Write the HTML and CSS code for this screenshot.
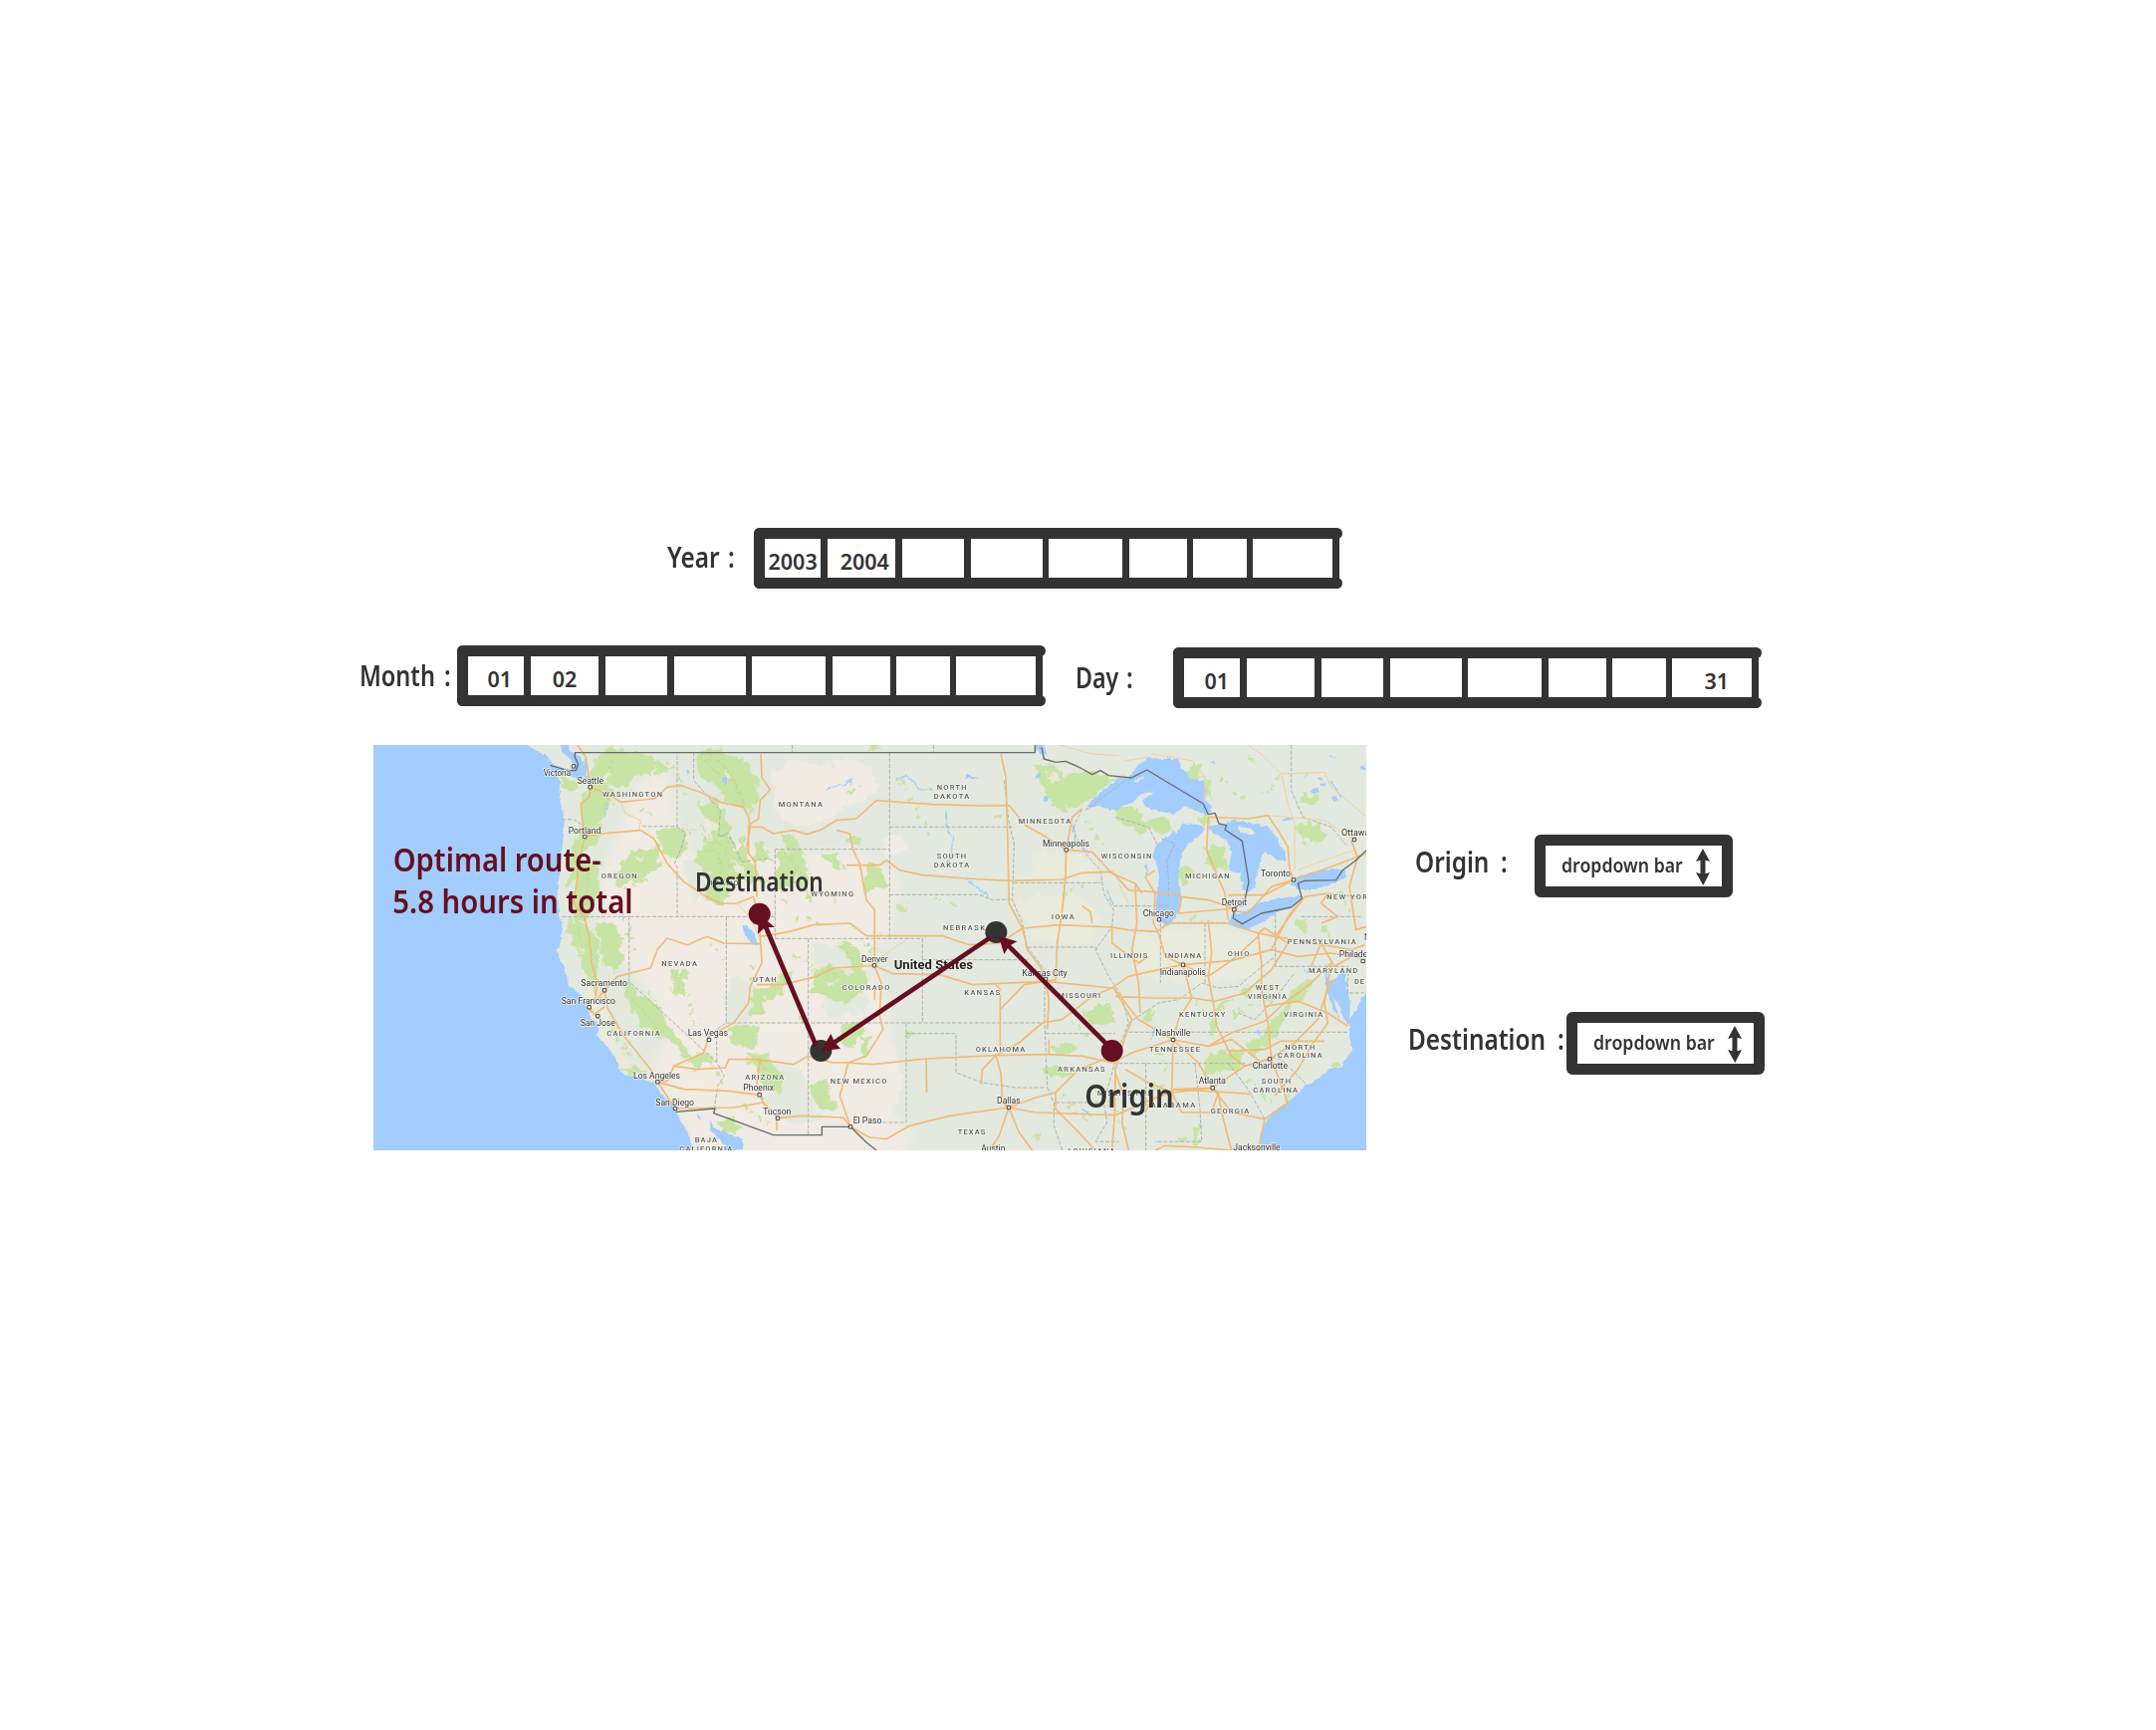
FILE: index.html
```html
<!DOCTYPE html>
<html lang="en">
<head>
<meta charset="utf-8">
<title>Optimal route</title>
<link rel="stylesheet" href="styles.css">
</head>
<body>
<main class="page">
  <section class="row row-year">
    <div class="label label-year"><span>Year</span><span class="colon">:</span></div>
    <div class="strip"><div class="cell c-2003">2003</div><div class="cell c-2004">2004</div><div class="cell"></div><div class="cell"></div><div class="cell"></div><div class="cell"></div><div class="cell"></div><div class="cell"></div></div>
  </section>
  <section class="row row-dates">
    <div class="label label-month"><span>Month</span><span class="colon">:</span></div>
    <div class="strip"><div class="cell c-m1">01</div><div class="cell c-m2">02</div><div class="cell"></div><div class="cell"></div><div class="cell"></div><div class="cell"></div><div class="cell"></div><div class="cell"></div></div>
    <div class="label label-day"><span>Day</span><span class="colon">:</span></div>
    <div class="strip strip-day"><div class="cell c-d1">01</div><div class="cell"></div><div class="cell"></div><div class="cell"></div><div class="cell"></div><div class="cell"></div><div class="cell"></div><div class="cell c-d31">31</div></div>
  </section>
  <section class="row row-map">
    <svg class="map" viewBox="15 23 2991 1221" preserveAspectRatio="none">
      <defs>
        <filter id="rough" x="-2%" y="-2%" width="104%" height="104%"><feTurbulence type="fractalNoise" baseFrequency="0.035" numOctaves="3" seed="4"/><feDisplacementMap in="SourceGraphic" scale="42" xChannelSelector="R" yChannelSelector="G"/></filter>
        <filter id="coast" x="-2%" y="-2%" width="104%" height="104%"><feTurbulence type="fractalNoise" baseFrequency="0.06" numOctaves="2" seed="8"/><feDisplacementMap in="SourceGraphic" scale="12" xChannelSelector="R" yChannelSelector="G"/></filter>
        <filter id="soft"><feGaussianBlur stdDeviation="16"/></filter>
        <clipPath id="landclip"><path d="M600 0L605 40 640 60 655 100 640 130 600 112 550 105 575 125 580 150 575 180 582 215 590 245 588 290 583 340 578 400 570 450 568 490 572 520 583 560 582 600 575 630 568 640 572 660 590 690 598 720 600 745 625 765 640 775 655 800 663 820 668 840 690 860 695 880 688 895 715 925 740 960 755 985 755 1010 825 1028 860 1040 880 1070 915 1100 928 1130 950 1170 965 1200 985 1260H2680L2690 1200 2700 1160 2725 1130 2760 1110 2790 1080 2820 1050 2860 1030 2890 1000 2935 990 2965 940 2955 870 2920 800 2895 740 2940 705 2958 800 2980 815 3020 740V0Z"/></clipPath>
      </defs>
      <rect class="water" width="3030" height="1260"/>
      <g filter="url(#coast)">
        <path class="land" d="M470 0L480 25 515 45 545 62 560 84 600 98 620 88 605 62 580 40 578 0Z"/>
        <path class="land" d="M600 0L605 40 640 60 655 100 640 130 600 112 550 105 575 125 580 150 575 180 582 215 590 245 588 290 583 340 578 400 570 450 568 490 572 520 583 560 582 600 575 630 568 640 572 660 590 690 598 720 600 745 625 765 640 775 655 800 663 820 668 840 690 860 695 880 688 895 715 925 740 960 755 985 755 1010 825 1028 860 1040 880 1070 915 1100 928 1130 950 1170 965 1200 985 1275H2680L2690 1200 2700 1160 2725 1130 2760 1110 2790 1080 2820 1050 2860 1030 2890 1000 2935 990 2940 975 2965 940 2955 905 2955 870 2935 840 2920 800 2895 770 2885 740 2910 725 2940 705 2950 760 2958 800 2955 850 2980 815 2995 780 3030 740V0Z"/>
      </g>
      <g clip-path="url(#landclip)">
        <path class="cream" filter="url(#soft)" d="M730 350L820 130 900 110 930 270 1010 380 1120 300 1200 350 1490 345 1600 420 1570 600 1500 650 1560 790 1580 960 1500 1060 1640 1200 1620 1260 1000 1260 940 1130 850 1000 900 900 820 720 720 650 690 500Z"/>
        <g class="cream" filter="url(#rough)"><path d="M1210 110l60-45 120 20 60 90-50 70-110 30-60-60zM1400 70l110 10 30 70-70 60-60-40zM1550 300l60-10 20 50-80 30zM1500 870l90 60 20 130-60 120-80-80z"/></g>
        <g class="pale"><path filter="url(#rough)" d="M640 700l40 20 60 180 60 110 40 20-50-10-80-90-60-130zM1950 490l180-30 80 80-40 90-170-20zM2300 600l180-30 230 30-20 120-200 30-180-30zM2000 340l150 20 50 80-200-10z"/><path filter="url(#rough)" class="sage" d="M1100 720l60 20 20 90-80 60-30-80zM1220 980l80 20 60 150-90 20-80-80zM1000 130l130-60 70 50 20 120-80 70-120-70zM950 370l60 0 30 60-60 60zM1330 620l120 10 60 80-20 120-110 10z"/></g>
        <g class="forest" filter="url(#rough)">
          <path d="M690 60l60-30 90 20 70 40-40 30-60-15-30 50-60-10 20 60-40 40-10 70-40 30-20 80-30 30 5-90 30-80 10-90z"/>
          <path d="M575 125l60 5-5 30-40 0zM760 50l30 40-20 60-30-20zM790 345l80-15 10 60-60 40-80 20 10-50z"/>
          <path d="M645 370l50 10-5 90-30 80-40 10-10-70zM590 545l60 15 50 60-10 100 0 60-30-60-40-80zM680 560l60-5 30 60-50 20-20-30z"/>
          <path d="M980 50l80-20 60 60 40 70-10 70-60-30-50-60-50-30zM990 205l60-15 30 60 20 90 60 50 50 60-60-20-50 0-30 70-60-10 20-80-50-40 40-60 10-60z"/>
          <path d="M870 285l60-20 35 30-10 50-40 20-40-30zM1120 290l30 60-10 50-30-40zM1170 310l30 30-5 40-30-10zM1100 60l40 5 30 60 10 70-40 10-40-80z"/>
          <path d="M1235 345l70 0 20 50-10 60-50-10-40 20zM1240 290l60 20 10 40-50-10zM1370 350l40 0 20 50-30-10zM1320 440l20 60-20-10zM1455 290l30 10-10 30-30-10z"/>
          <path d="M750 730l30-10 40 60 50 30 60 90 40 50-20 10-70-70-60-20-40-80zM700 615l40-5 40 60-40 40-30-20zM755 1000l60-5 20 20-50 0zM910 700l20-5 5 80-15 10zM940 695l20 10-10 80-20-20z"/>
          <path d="M970 960l60-5 10 30-60 15-20-20zM1085 880l50-15 50 10-20 60-70-10zM1160 760l50-10 30-40 30 0-20 60-50 10-10 50-40 10zM1150 950l50 10 50 60-10 50-40-10-20-50-40-30z"/>
          <path d="M1340 700l50-10 60 20 50-10-10 70-70 30-80-30zM1420 620l50 10 30 80-40 0zM1330 1040l50-10 10 60 20 30-40 10-30-30zM1420 870l60-10 20 30-50 40-40-10zM1490 900l20 0-10 60-20 0zM1040 1150l60 0 30 30-50 15z"/>
          <path d="M1500 380l40 0 20 60-60 30zM1510 10l30 0 0 25-30 0zM1585 505l40 0-20 20-20 0zM1890 230l20-5 0 20-20 0zM2000 90l60-10 30 30 60-10 80 20 40 0-60 30-70 60-50 10-30-20-30-50z"/>
          <path d="M2250 215l70 0 20 40 60-20 30 60-60-10-60 0-60-40zM2440 130l40-50 30 0 0 40-40 30zM2500 235l30 0 10 30-30 5zM2510 130l20-10 10 70-20-20zM2520 330l60 0 10 60-40 10-30-40zM2450 380l30 10-10 60-30-20z"/>
          <path d="M2800 260l60-5 20 40-30 30-50-30zM2810 170l50 0-10 30-40 0zM2790 550l30-10 10 40-30 0zM2860 565l30 0 10 30-30 0zM2650 60l20-5 0 15-20 0zM2630 750l30 5-10 20-30-5zM2330 830l40-10-10 30-30 10z"/>
          <path d="M2060 925l70 0 10 20-70 10zM2020 1000l80-10 20 20-70 15zM2150 830l90-30 10 60-80 10zM2190 800l40 0 0 30-30 0zM1615 885l40 5-10 15-30-5zM2000 1190l20-5 0 30-20 0zM2370 1050l30 0-10 20-20 0z"/>
          <path d="M2530 960l50-25 60 5-20 60-80 10-20-20zM2640 930l50-40 60-60 20 0-40 80-60 50zM2750 810l50-60 40-30 10 10-50 70-50 40zM2540 850l20 0-10 60-20-10zM2570 790l25-10-25 60-20-10zM2760 1080l20 10 10 20-20 0zM2490 1170l15 0-5 60-15 0zM2430 1210l30-5 10 15-30 10zM2895 985l30-5-10 20-20-5z"/>
          <path class="scrub" d="M820 210l30 30M1030 430l60 30M900 60l60 120M1290 540l70 20M1450 170l40-30M770 460l60-30M1030 620l40 50M780 580l30 60M1240 430l10 70M1150 690l20 60M1280 660l60 30M1130 1110l80 60M1300 850l60 70M960 800l30 60M1500 620l40 60M1380 470l40 30M830 760l60 70M1050 1010l30 50M1600 130l90 160M1700 480l80 30M2120 850l60 60M2070 1060l100 110M2160 250l60 90M2480 540l40 30M2380 940l30 80M2470 780l80 80M2650 1030l80 80M2600 840l120-60M2920 470l50 60M2700 170l60-70M2560 120l80 70M2230 1100l60 90M2090 480l60-40M700 260l-20 80M730 880l60 80"/>
        </g>
        <path class="ridge" filter="url(#rough)" d="M1010 230l30 50 30-20 20 60 30 40M1000 260l30 60 40 0 20 70 40 10M1010 330l40 20 20 60M1020 60l60 30 40 80M1000 50l40 50 60 40 30 60M690 110l30 50-10 70M720 70l30 60M660 400l0 70-20 70M630 580l40 60 10 80M770 760l50 60 60 60M1260 350l20 40 20 40M1440 640l30 50 10 40M1380 700l50 30M1170 970l40 40M1350 1060l20 50M2560 960l50 0M2660 930l60-60M910 700l60 80M970 280l-30 60"/>
        <g class="cream speck" filter="url(#rough)"><path d="M1010 240l40 20-20 60zM1090 370l40 30-10 15zM840 130l20-40 10 50zM1290 400l10 30-20 10zM1370 730l40 5-20 20zM2050 110l30 10-20 20zM2580 945l20 5-10 15zM700 120l30-20-10 40zM720 190l20 0-10 30zM1075 90l20 40-25-10zM630 620l20 60-10 0zM800 360l40-5-20 20z"/></g>
      </g>
      <g class="lakes" filter="url(#coast)">
        <path d="M2160 215L2190 180 2230 145 2270 120 2290 120 2320 90 2345 62 2390 65 2440 65 2450 95 2480 125 2515 130 2525 160 2520 185 2540 210 2530 235 2500 225 2460 205 2430 230 2390 225 2345 210 2330 190 2370 162 2330 170 2300 195 2260 215 2230 218 2200 205Z"/>
        <path d="M2450 262L2500 262 2520 275 2500 300 2470 320 2450 350 2445 380 2440 430 2448 470 2440 520 2425 550 2405 565 2385 555 2372 520 2375 470 2382 420 2375 380 2362 360 2370 330 2400 300 2420 285 2435 290Z"/>
        <path d="M2520 268L2570 262 2600 250 2660 258 2710 270 2735 300 2760 350 2765 370 2740 370 2700 345 2690 360 2680 400 2670 450 2650 468 2635 460 2628 410 2590 400 2600 350 2585 310 2550 290Z"/>
        <path d="M2590 560L2600 535 2650 520 2690 495 2750 485 2808 475 2812 485 2780 510 2730 530 2700 555 2650 578 2620 575Z"/>
        <path d="M2775 440L2800 420 2850 405 2900 395 2940 400 2945 420 2910 440 2850 458 2800 458Z"/>
        <path d="M2885 680l8 60 20 70 15 40-20-30-22-60-6-60zM2620 500l15-8 2 15-12 5zM1125 565l20 5 20 30 8 25-20-5-18-25zM1030 1150l10 25 35 15 50 20 5 35h-50l-20-30-30-30zM1070 115l10 5-5 25-8-8zM955 100l10-5-5 25zM1500 620l6 0 0 8-6 0zM2010 0l20 10 15 45-15-5-20-15zM2010 115l15-8 0 12-15 6zM2035 175l15 5-5 15-10-5zM2340 385l6 0 2 35-6-5zM1800 110l20 10 20-2-20 8-20-5zM650 60l10 20-4 25 10 30-12 5-5-30 0-30zM765 520l6 25-6 10zM990 1130l12 20-8 0zM2330 70l-25 30 20-5zM2840 160l20-10 5 15-20 5zM2900 180l15-5 5 15-15 0zM2870 140l12-4 0 12-10 2zM2750 245l20-4 15 6-25 5zM2990 90l10-6 5 12-10 4z"/>
        <path class="river" d="M1590 125l30-10 25 20 15 25 40-5M1740 220l5 60 15 20-5 60-15 20M1800 420l30 30 40 30M1380 160l40-20 15 5 20-20-5 20M720 200l-10 40M780 740l10 0M2225 460l20 50M2910 60l-15-5M2860 120l15 10M2540 70l8 12M2820 120l10-10M2900 130l30 50M2120 260l10 50 40 40M2150 1120l30 20M2820 700l12 10M2370 870l-10 40M2680 880l10 30M2620 280l50 0 20 15-50 0"/>
      </g>
      <path class="isles" filter="url(#coast)" d="M2620 266l40 10 15 18-30-2-25-14zM2305 135l25-18 8 2-20 16zM2400 300l20-28 4 0-15 30z"/>
      <g class="state">
        <path d="M583 247L620 248 645 265M825 268H930V46M930 268L955 290 940 340 922 380 930 390V540M583 540H1225M785 540V735L1050 980 1072 1020 1052 1050 1042 1118M1078 540V860L1048 880 1050 980M1078 860H2037M1325 606V1198M1225 337V606M1225 606H1669M1225 337H1570M980 46V130L1060 220 1055 300 1085 290 1125 375 1205 365 1225 375M1277 23V46M1570 46V606M1570 270H1940M1570 474H1840L1880 490 1935 488M1669 606V860M1669 670H1990M1550 1160H1620V860M1620 892H1770V1010L1850 1040 1950 1055 2040 1055M2037 730V860L2045 1055 2065 1100V1170L2090 1244M2040 892H2250M2070 1100H2210M1915 130L1930 260 1945 320 1940 490 1970 560 1985 632 2037 700M1945 438H2205M1985 632H2190L2195 640M2150 215L2120 280 2160 350 2205 400 2215 470 2245 520 2240 570 2190 640 2230 720 2270 780 2290 860 2260 940 2240 1010 2215 1100 2225 1160 2190 1218H2260M2250 240L2350 270 2380 330M2245 508H2410M2386 560V740M2400 558H2590M2520 558V740M2732 530V690H2950M2810 540H2990M2290 888H2950M2260 982H2640M2342 982V1244M2490 982L2505 1120 2510 1218H2370M2590 982L2650 1060 2700 1150M2640 990L2720 965 2750 970 2830 1050M2290 860L2380 800 2440 790 2510 740 2560 755 2620 750 2680 700 2732 660M2780 23V160L2815 240 2900 270 2950 330M2620 830L2670 850 2720 800 2790 710M2410 480V420L2405 370 2430 320 2390 305M2160 220L2280 130M1702 23V46M2950 690V770H3000"/>
      </g>
      <g class="roads">
        <path d="M630 23L655 60 668 150 665 180 640 200 645 260 652 300 632 380 628 440 618 500 650 540 665 600 672 680 690 740 680 800 711 762 750 720 850 695 870 640 900 605 960 625 1020 600 1070 620 1180 622"/>
        <path d="M668 150L720 170 760 195 860 185 900 150 940 145 1000 165 1060 195 1130 210 1145 240 1150 270 1185 270 1220 290 1280 280 1320 292 1360 280 1410 250 1470 245 1530 190 1700 202 1840 206 1930 205 1980 265 2050 305 2102 339 2180 345 2240 410 2310 440 2330 470"/>
        <path d="M652 299L700 290 760 285 820 280 860 305 900 380 950 435 1010 475 1060 500 1110 500 1160 480 1170 520 1180 600 1185 680 1150 750 1145 800 1100 860 1026 900 1010 950 920 990 900 1035 871 1038"/>
        <path d="M1182 50L1185 120 1210 158 1180 190 1175 245 1145 265 1145 350 1165 375 1170 480M1150 270L1140 330M1410 280L1450 290 1460 340 1480 380 1500 490 1525 520 1525 690 1545 740 1540 840 1550 880 1500 960 1445 980 1420 1080 1452 1173"/>
        <path d="M1440 385H1540L1560 370 1600 400 1670 415 1800 425 1930 432 2090 428 2150 408 2240 405 2290 460 2420 470 2450 480 2530 490 2610 515"/>
        <path d="M1180 600L1270 585 1340 565 1450 560 1500 598 1730 598 1810 625 1900 620 1970 575 2080 565 2240 572 2290 580 2375 585 2410 560 2590 560 2680 590 2732 600 2850 620 2960 640 3000 625"/>
        <path d="M1170 745L1250 745 1350 720 1400 695 1524 687 1580 712 1720 715 1820 745 2040 735 2240 755 2290 720 2380 700 2454 685 2600 672 2720 640 2800 660 2900 650 2990 665"/>
        <path d="M711 762L720 815 770 900 850 1000 871 1038 924 1118 1100 1115 1190 1100 1233 1147 1300 1140 1430 1145 1452 1173 1510 1205 1560 1210 1630 1170 1750 1140 1929 1115 2010 1130 2250 1138 2430 1060 2543 1056 2640 990 2715 969 2790 920 2860 850 2885 770 2910 730"/>
        <path d="M665 813L680 835 711 812M663 820L690 840M871 1038L950 1060 1080 1065 1178 1077 1190 1090M920 990L990 1000 1075 995 1085 970 1170 970 1280 985 1325 960 1400 980 1440 980 1520 985 1680 968 1890 958 2050 955 2150 960 2240 980 2300 950 2424 911 2530 930 2600 890 2700 855 2760 800 2840 740 2900 680"/>
        <path d="M1905 50L1920 120 1925 290 1930 500 1970 575 1985 640 2030 700 2040 735 2050 790 2045 880M1525 750V790M1180 970L1170 1040 1178 1077 1195 1110M1230 1147V1185"/>
        <path d="M2102 339L2100 420 2090 520 2075 620 2070 730 2040 735M2102 339L2120 240 2150 215M2180 560L2175 525 2150 508M2240 572L2240 620 2320 680 2350 660M2240 755L2180 780 2090 850 2030 860 1960 920 1890 958 1905 1010 1910 1100 1929 1115 1900 1200 1870 1244M1890 745L1903 760V950M1903 820L1975 745 2040 735M1890 958L1850 1000 1845 1045M1680 968L1682 1070M1929 1115L1960 1190 2000 1244M1929 1115L2010 1085 2070 1070 2140 1000 2240 960M2050 955V910M2070 1070V1120L2140 1190 2190 1244M2240 1240L2248 1140 2250 1000 2280 900 2300 850 2245 755"/>
        <path d="M2245 755L2320 850 2424 911 2500 980 2543 1056 2600 1130 2700 1150M2250 780L2360 785 2480 785 2550 795 2640 770 2720 700 2770 620M2310 440L2315 560 2300 640 2320 740 2325 830M2370 400L2340 420 2370 470 2365 560 2380 590 2400 660 2454 685 2480 785 2440 850 2424 911 2420 1070 2543 1056M2420 1070L2360 1090 2340 1130M2420 1070L2450 1130 2540 1130 2560 1070M2454 685L2530 720 2600 672 2680 600M2530 550L2540 650 2530 720 2545 800 2555 870 2600 960 2640 990M2530 240L2525 340 2550 400 2580 470 2590 550M2450 480L2440 530 2610 515"/>
        <path d="M2530 240L2650 245 2710 235 2740 280 2770 330 2775 400 2787 429 2720 450 2650 530 2600 520M2590 475L2700 475 2787 429 2900 390 3006 350M2680 590L2690 680 2690 760 2710 860 2720 969 2770 1100 2700 1150 2680 1244M2770 620L2700 575 2680 590M2732 600L2760 560 2820 480 2890 470 2980 480M2820 480L2770 540 2720 640M2890 470L2870 500 2920 540 2870 560M2960 310L2980 360 2955 450 2975 580 3006 570M2700 810L2800 795 2890 830 2950 870M2900 680L2880 800 2890 860 2840 930 2800 1000 2730 1080M2590 945L2700 940 2750 915 2880 915M2690 980L2640 940 2600 910 2530 930M2424 1060L2600 1070 2660 1075M2600 1244L2570 1130 2560 1070 2543 1056M2370 1244L2400 1230 2500 1235 2600 1244M2280 1000L2350 1040 2420 1070M2250 1010L2275 1080 2270 1160 2290 1244M2720 640L2760 560M2870 620L2910 690 2980 650M2870 620L2840 690"/>
        <path class="minor" d="M2650 23L2700 60 2750 110 2770 200 2790 260 2790 400M2750 110L2880 105 2900 150 2960 200 3006 240M2360 50L2480 70 2520 120 2520 200M2710 235L2880 250 2970 310M2800 400L2880 370 2970 340M1500 690L1560 650 1620 610M2280 70L2350 60M1540 590L1560 600M2260 440L2290 500M760 195L775 230 820 250 815 280M1108 500L1150 540 1180 610M2080 23L2180 50 2260 55"/>
      </g>
      <g class="country"><path d="M548 84L600 100 625 100 632 80 622 60 622 46H2008V23M2028 30L2035 65 2070 75 2100 72 2130 85 2150 95 2180 112 2205 100 2230 115 2298 122 2345 98 2515 200 2530 232 2550 228 2562 260 2585 265 2580 278 2632 312 2652 435 2640 490 2608 515 2605 545 2632 562 2690 530 2780 512 2812 485 2800 440 2820 432 2915 430 2935 400 2975 370 3006 340M925 1128L1044 1118 1040 1132 1220 1198H1366V1173H1452L1500 1220 1530 1244"/></g>
      <g class="pins"><path d="M613 82h10v10h-10zM663 145h10v10h-10zM647 294h10v10h-10zM706 757h10v10h-10zM660 808h10v10h-10zM686 835h10v10h-10zM1021 906h10v10h-10zM866 1033h10v10h-10zM919 1113h10v10h-10zM1173 1072h10v10h-10zM1228 1142h10v10h-10zM1447 1168h10v10h-10zM1519 682h10v10h-10zM1924 1110h10v10h-10zM2097 334h10v10h-10zM2035 723h10v10h-10zM2377 544h10v10h-10zM2603 514h10v10h-10zM2782 424h10v10h-10zM2965 303h10v10h-10zM2449 680h10v10h-10zM2419 906h10v10h-10zM2710 964h10v10h-10zM2538 1051h10v10h-10zM2991 669h10v10h-10z"/></g>
      <g class="names">
        <text x="705" y="179" textLength="180">WASHINGTON</text><text x="1235" y="209" textLength="133">MONTANA</text><text x="701" y="426" textLength="108">OREGON</text><text x="1030" y="446" textLength="85">IDAHO</text><text x="1333" y="480" textLength="128">WYOMING</text><text x="883" y="690" textLength="107">NEVADA</text><text x="1158" y="736" textLength="71">UTAH</text><text x="1427" y="762" textLength="143">COLORADO</text><text x="718" y="899" textLength="160">CALIFORNIA</text><text x="1135" y="1031" textLength="117">ARIZONA</text><text x="1391" y="1044" textLength="170">NEW MEXICO</text><text x="983" y="1219" textLength="67">BAJA</text><text x="937" y="1246" textLength="159">CALIFORNIA</text>
        <text x="1712" y="159" textLength="90">NORTH</text><text x="1703" y="186" textLength="107">DAKOTA</text><text x="1712" y="366" textLength="88">SOUTH</text><text x="1703" y="392" textLength="107">DAKOTA</text><text x="1958" y="259" textLength="158">MINNESOTA</text><text x="1731" y="580" textLength="145">NEBRASKA</text><text x="2057" y="547" textLength="69">IOWA</text><text x="1795" y="776" textLength="108">KANSAS</text><text x="2077" y="786" textLength="128">MISSOURI</text><text x="1829" y="946" textLength="149">OKLAHOMA</text><text x="2076" y="1007" textLength="143">ARKANSAS</text><text x="1775" y="1196" textLength="83">TEXAS</text><text x="2108" y="1254" textLength="140">LOUISIANA</text>
        <text x="2207" y="365" textLength="152">WISCONSIN</text><text x="2460" y="426" textLength="134">MICHIGAN</text><text x="2235" y="664" textLength="112">ILLINOIS</text><text x="2399" y="664" textLength="110">INDIANA</text><text x="2588" y="660" textLength="65">OHIO</text><text x="2768" y="623" textLength="207">PENNSYLVANIA</text><text x="2887" y="487" textLength="140">NEW YORK</text><text x="2832" y="710" textLength="148">MARYLAND</text><text x="2970" y="743" textLength="30">DE</text><text x="2672" y="760" textLength="72">WEST</text><text x="2648" y="788" textLength="118">VIRGINIA</text><text x="2442" y="842" textLength="139">KENTUCKY</text><text x="2757" y="842" textLength="118">VIRGINIA</text><text x="2352" y="946" textLength="153">TENNESSEE</text><text x="2761" y="940" textLength="90">NORTH</text><text x="2739" y="965" textLength="134">CAROLINA</text><text x="2690" y="1042" textLength="88">SOUTH</text><text x="2665" y="1070" textLength="134">CAROLINA</text><text x="2195" y="1078" textLength="158">MISSISSIPPI</text><text x="2357" y="1116" textLength="134">ALABAMA</text><text x="2537" y="1133" textLength="116">GEORGIA</text>
      </g>
      <g class="cities">
        <text x="527" y="116" textLength="82" lengthAdjust="spacingAndGlyphs">Victoria</text><text x="629" y="139" textLength="79" lengthAdjust="spacingAndGlyphs">Seattle</text><text x="602" y="289" textLength="98" lengthAdjust="spacingAndGlyphs">Portland</text><text x="640" y="750" textLength="140" lengthAdjust="spacingAndGlyphs">Sacramento</text><text x="581" y="802" textLength="163" lengthAdjust="spacingAndGlyphs">San Francisco</text><text x="638" y="869" textLength="105" lengthAdjust="spacingAndGlyphs">San Jose</text><text x="962" y="900" textLength="121" lengthAdjust="spacingAndGlyphs">Las Vegas</text><text x="798" y="1029" textLength="141" lengthAdjust="spacingAndGlyphs">Los Angeles</text><text x="865" y="1108" textLength="116" lengthAdjust="spacingAndGlyphs">San Diego</text><text x="1129" y="1065" textLength="92" lengthAdjust="spacingAndGlyphs">Phoenix</text><text x="1189" y="1136" textLength="84" lengthAdjust="spacingAndGlyphs">Tucson</text><text x="1460" y="1162" textLength="86" lengthAdjust="spacingAndGlyphs">El Paso</text><text x="1485" y="676" textLength="80" lengthAdjust="spacingAndGlyphs">Denver</text><text x="1893" y="1104" textLength="71" lengthAdjust="spacingAndGlyphs">Dallas</text><text x="1846" y="1248" textLength="72" lengthAdjust="spacingAndGlyphs">Austin</text><text x="2031" y="328" textLength="141" lengthAdjust="spacingAndGlyphs">Minneapolis</text><text x="1969" y="718" textLength="136" lengthAdjust="spacingAndGlyphs">Kansas City</text><text x="2333" y="538" textLength="94" lengthAdjust="spacingAndGlyphs">Chicago</text><text x="2570" y="507" textLength="76" lengthAdjust="spacingAndGlyphs">Detroit</text><text x="2688" y="419" textLength="90" lengthAdjust="spacingAndGlyphs">Toronto</text><text x="2931" y="295" textLength="85" lengthAdjust="spacingAndGlyphs">Ottawa</text><text x="2384" y="715" textLength="139" lengthAdjust="spacingAndGlyphs">Indianapolis</text><text x="2371" y="900" textLength="105" lengthAdjust="spacingAndGlyphs">Nashville</text><text x="2663" y="999" textLength="106" lengthAdjust="spacingAndGlyphs">Charlotte</text><text x="2501" y="1044" textLength="82" lengthAdjust="spacingAndGlyphs">Atlanta</text><text x="2605" y="1243" textLength="142" lengthAdjust="spacingAndGlyphs">Jacksonville</text><text x="2924" y="663" textLength="142" lengthAdjust="spacingAndGlyphs">Philadelphia</text><text x="3000" y="612">New York</text>
        <text class="usa" x="1583" y="699" textLength="238" lengthAdjust="spacingAndGlyphs">United States</text>
      </g>
      <g class="route">
        <circle cx="1178" cy="532" r="33"/><circle class="stop" cx="1363" cy="944" r="33"/><circle class="stop" cx="1891" cy="587" r="33"/><circle cx="2240" cy="944" r="33"/>
        <path class="leg" d="M2230 930L1925 625M1873 603L1400 921M1349 930L1196 569"/>
        <path d="M1898 598L1954 615 1930 628 1915 653ZM1363 945L1393 893 1404 917 1422 938ZM1176 532L1173 592 1195 572 1224 572Z"/>
      </g>
      <g class="notes">
        <text x="984" y="465" textLength="386" lengthAdjust="spacingAndGlyphs" font-size="80">Destination</text>
        <text x="2158" y="1114" textLength="268" lengthAdjust="spacingAndGlyphs" font-size="98">Origin</text>
        <text class="headline" x="74" y="403" textLength="627" lengthAdjust="spacingAndGlyphs" font-size="98">Optimal route-</text>
        <text class="headline" x="73" y="529" textLength="724" lengthAdjust="spacingAndGlyphs" font-size="98">5.8 hours in total</text>
      </g>
    </svg>
    <aside class="side">
      <div class="row pick">
        <div class="label label-origin"><span>Origin</span><span class="colon">:</span></div>
        <div class="drop"><span class="drop-text">dropdown bar</span><svg class="updown" viewBox="0 0 14 37"><path d="M7 0l7 13-4.500-1.200v13.400L14 24 7.300 37 0 24l4.500 1.200V11.800L0 13z"/></svg></div>
      </div>
      <div class="row pick pick-destination">
        <div class="label label-destination"><span>Destination</span><span class="colon">:</span></div>
        <div class="drop"><span class="drop-text">dropdown bar</span><svg class="updown" viewBox="0 0 14 37"><path d="M7 0l7 13-4.500-1.200v13.400L14 24 7.300 37 0 24l4.500 1.200V11.800L0 13z"/></svg></div>
      </div>
    </aside>
  </section>
</main>
</body>
</html>
```
FILE: styles.css
```css
* { box-sizing: border-box; }
body { margin: 0; background: #fff; color: #333; font-family: "Noto Sans", "Open Sans", sans-serif; }
.page { width: 2165px; height: 1737px; padding-top: 530px; overflow: hidden; }
.row { display: flex; align-items: flex-start; }
.row-year { margin-left: 670px; height: 61px; }
.row-dates { margin: 57px 0 0 361px; height: 63px; }
.row-map { margin: 37px 0 0 375px; }

.label { display: flex; justify-content: space-between; flex: none; font-size: 28px; font-weight: 600; line-height: 60px; white-space: nowrap; }
.label span { transform: scaleX(.87); transform-origin: left; width: 0; }
.label .colon { width: 8px; }
.label-year { width: 87px; padding-right: 18px; line-height: 58px; }
.label-month { width: 98px; padding-right: 5px; }
.label-month span:first-child { transform: scaleX(.84); }
.label-day { width: 98px; margin-left: 33px; padding: 0 39px 0 0; margin-top: 2px; }
.label-day span:first-child { transform: scaleX(.83); }

.strip { position: relative; flex: none; width: 588px; height: 61px; padding: 11px 6.700px 11px 10.500px; display: grid; grid-template-columns: 56.500px 68.500px 62.400px 71.600px 73.900px 57.900px 53.300px 79.900px; column-gap: 6.700px; background: #333; border-radius: 6px; }
.strip::before, .strip::after { content: ""; position: absolute; left: 0; right: -2.500px; height: 11px; border-radius: 5.500px; background: #333; }
.strip::before { top: 0; }
.strip::after { bottom: 0; }
.strip-day { margin-top: 2px; }
.cell { height: 39px; background: #fff; font-size: 21.500px; font-weight: 600; line-height: 45px; white-space: nowrap; }
.c-2003 { padding-left: 4px; }
.c-2004 { padding-left: 13px; }
.c-m1 { padding-left: 20px; }
.c-m2 { padding-left: 22px; }
.c-d1 { padding-left: 21px; }
.c-d31 { padding-left: 32px; }

.side { padding: 90px 0 0 43px; }
.pick { height: 63px; }
.pick-destination { margin-top: 115px; }
.label-origin, .label-destination { line-height: 55px; }
.label-origin { width: 120px; margin-left: 6px; padding-right: 26px; }
.label-destination { width: 158px; padding-right: 1px; }
.label-destination { margin-left: -1px; width: 159px; }
.drop { display: flex; flex: none; width: 199px; height: 63px; border: 11px solid #333; border-radius: 6px; background: #fff; }
.drop-text { width: 134px; margin-left: 16px; font-size: 20px; font-weight: 600; line-height: 40px; white-space: nowrap; transform: scaleX(.885); transform-origin: left; }
.updown { width: 14px; height: 37px; margin: 3px 0 0 1px; fill: #333; }

.map { display: block; flex: none; width: 997px; height: 407px; }
.water, .lakes { fill: #a3ccff; }
.land, .isles { fill: #e3e9df; }
.cream { fill: #f0ebe3; }
.speck { opacity: .8; }
.pale { fill: #eaebdd; opacity: .8; }
.sage { fill: #e0e9dc; }
.forest { fill: #c8e4a4; }
.scrub { fill: none; stroke: #c8e4a4; stroke-width: 11; stroke-dasharray: 14 17 7 21; }
.ridge { fill: none; stroke: #b5d78f; stroke-width: 4; stroke-dasharray: 16 8; opacity: .65; }
.river { fill: none; stroke: #a3ccff; stroke-width: 4; }
.state { fill: none; stroke: #adb3ac; stroke-width: 3; stroke-dasharray: 12 5; }
.roads { fill: none; stroke: #f0bb78; stroke-width: 5; stroke-linejoin: round; }
.roads .minor { stroke-width: 3; stroke: #f3cf9c; }
.country { fill: none; stroke: #686c6c; stroke-width: 4; stroke-linejoin: round; }
.pins { fill: #fff; stroke: #444; stroke-width: 3; }
.names, .cities { font-family: Roboto, sans-serif; stroke: #f5f5ef; stroke-width: 4; paint-order: stroke; stroke-linejoin: round; }
.names { font-size: 22.500px; font-weight: 500; fill: #5c5c5c; }
.cities { font-size: 26px; fill: #333; }
.usa { font-size: 36px; font-weight: 700; fill: #222; }
.route { fill: #650f20; }
.route .stop { fill: #333; }
.leg { fill: none; stroke: #650f20; stroke-width: 14; }
.notes { font-weight: 600; fill: #333; }
.headline { fill: #650f20; }
```
